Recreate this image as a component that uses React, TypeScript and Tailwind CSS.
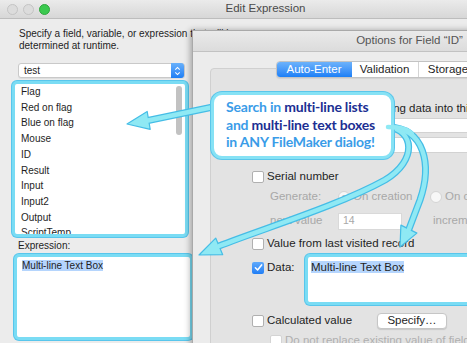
import React from "react";

const items = ["Flag", "Red on flag", "Blue on flag", "Mouse", "ID", "Result", "Input", "Input2", "Output", "ScriptTemp"];

function Check({ checked, dim }: { checked?: boolean; dim?: boolean }) {
  if (checked) {
    return (
      <span className="flex h-[12px] w-[12px] shrink-0 items-center justify-center rounded-[2px] bg-gradient-to-b from-[#5fa9fb] to-[#1f7ef5]">
        <svg viewBox="0 0 12 12" className="h-[11px] w-[11px]">
          <path d="M2.6 6.3 L5 8.7 L9.4 3.2" stroke="white" strokeWidth="1.7" fill="none" strokeLinecap="round" strokeLinejoin="round" />
        </svg>
      </span>
    );
  }
  return (
    <span
      className={`h-[12px] w-[12px] shrink-0 rounded-[2px] border bg-white ${dim ? "border-[#d4d4d4]" : "border-[#b0b0b0]"}`}
    />
  );
}

function Radio({ on }: { on?: boolean }) {
  return (
    <span className="flex h-[12px] w-[12px] shrink-0 items-center justify-center rounded-full border border-[#d4d4d4] bg-[#f7f7f7]">
      {on && <span className="h-[4px] w-[4px] rounded-full bg-[#b8b8b8]" />}
    </span>
  );
}

function Arrows() {
  const fill = "#8fe9f4";
  const edge = "#45bde6";
  const shaft1 = "M213 107 L148 120.5";
  const shaft2 = "M388 127 C414 130, 418 160, 385 180 C340 205, 265 228, 219 246";
  const shaft3 = "M388 127 C425 128, 432 165, 420 200 L409 229";
  return (
    <svg className="pointer-events-none absolute left-0 top-0" width="467" height="343" viewBox="0 0 467 343">
      {[shaft1, shaft2, shaft3].map((d, i) => (
        <path key={`o${i}`} d={d} stroke={edge} strokeWidth="7" fill="none" strokeLinecap="round" />
      ))}
      <polygon points="127,124 147.2,111.5 150.2,129.3" fill={fill} stroke={edge} strokeWidth="1.2" strokeLinejoin="round" />
      <polygon points="199,255 215.7,238.1 222.7,254.7" fill={fill} stroke={edge} strokeWidth="1.2" strokeLinejoin="round" />
      <polygon points="400,247 400.9,225.1 416.9,233.1" fill={fill} stroke={edge} strokeWidth="1.2" strokeLinejoin="round" />
      {[shaft1, shaft2, shaft3].map((d, i) => (
        <path key={`i${i}`} d={d} stroke={fill} strokeWidth="4.5" fill="none" strokeLinecap="round" />
      ))}
    </svg>
  );
}

export default function App() {
  return (
    <div className="relative h-[343px] w-[467px] overflow-hidden bg-[#ececec] font-['Liberation_Sans',Arial,sans-serif] text-[#1e1e1e]">
      {/* Edit Expression (back window) */}
      <div className="absolute left-0 top-0 flex h-[343px] w-[527px] flex-col bg-[#ececec]">
        <div className="relative flex h-[19px] shrink-0 items-center border-b border-[#bdbdbd] bg-gradient-to-b from-[#ebebeb] to-[#d7d7d7] pl-[7px]">
          <div className="flex gap-[5px]">
            <span className="h-[11px] w-[11px] rounded-full border border-[#c4c4c4] bg-[#dcdcdc]" />
            <span className="h-[11px] w-[11px] rounded-full border border-[#c4c4c4] bg-[#dcdcdc]" />
            <span className="h-[11px] w-[11px] rounded-full border border-[#2fa63e] bg-[#3bc94f]" />
          </div>
          <span className="absolute inset-x-0 pl-[4px] text-center text-[11.5px] text-[#4a4a4a]">Edit Expression</span>
        </div>
        <div className="flex flex-col pl-[18px] pt-[9px]">
          <p className="ml-[1px] text-[10px] leading-[11.5px]">
            Specify a field, variable, or expression that will be
            <br />
            determined at runtime.
          </p>
          <div className="mt-[12px] flex h-[15px] w-[167px] items-center justify-between rounded-[3px] border border-[#c9c9c9] bg-white pl-[5px] shadow-[0_1px_0_rgba(0,0,0,0.06)]">
            <span className="text-[10px]">test</span>
            <span className="flex h-[15px] w-[13px] flex-col items-center justify-center rounded-r-[3px] bg-gradient-to-b from-[#67b0fb] to-[#1c7ef5]">
              <svg viewBox="0 0 8 11" className="h-[10px] w-[7px]">
                <path d="M1.5 4 L4 1.5 L6.5 4 M1.5 7 L4 9.5 L6.5 7" stroke="white" strokeWidth="1.2" fill="none" />
              </svg>
            </span>
          </div>
          <div className="relative -ml-[6px] mt-[3px] h-[156px] w-[176px] overflow-hidden rounded-[5px] border-[3px] border-[#7adcf4] bg-white shadow-[0_0_0_1px_#58c6ec]">
            <ul className="pl-[3px] text-[10px] leading-[15.7px]">
              {items.map((t) => (
                <li key={t} className="pl-[3px]">
                  {t}
                </li>
              ))}
            </ul>
            <span className="absolute right-[3px] top-[2px] h-[49px] w-[6px] rounded-full bg-[#c2c2c2]" />
          </div>
          <span className="mt-[3px] text-[10px] leading-[12px]">Expression:</span>
          <div className="-ml-[4px] mt-[2px] h-[86px] w-[179px] rounded-[5px] border-[3px] border-[#7adcf4] bg-white pl-[5px] pt-[3px] text-[10px] leading-[12px] shadow-[0_0_0_1px_#58c6ec]">
            <span className="bg-[#b5d5fd]">Multi-line Text Box</span>
          </div>
        </div>
      </div>

      {/* Options for Field (front window) */}
      <div className="absolute left-[192px] top-[30px] flex h-[330px] w-[434px] flex-col border-l border-t border-[#a9a9a9] bg-[#ececec] shadow-[-2px_0_6px_rgba(0,0,0,0.3)]">
        <div className="flex h-[21px] shrink-0 items-center justify-center border-b border-[#c2c2c2] bg-gradient-to-b from-[#eaeaea] to-[#dcdcdc] text-[11.5px] text-[#555]">
          Options for Field “ID”
        </div>
        <div className="flex flex-col px-[17px]">
          <div className="relative z-10 mt-[9px] flex h-[17px] justify-center text-[11.5px]">
            <div className="flex overflow-hidden rounded-[4px] border border-[#c3c3c3] bg-white shadow-[0_1px_1px_rgba(0,0,0,0.08)]">
              <span className="flex w-[75px] items-center justify-center bg-gradient-to-b from-[#6cb2fb] to-[#1a7ff6] text-white">Auto-Enter</span>
              <span className="flex w-[67px] items-center justify-center border-r border-[#d4d4d4]">Validation</span>
              <span className="flex w-[60px] items-center justify-center border-r border-[#d4d4d4]">Storage</span>
              <span className="flex w-[64px] items-center justify-center">Furigana</span>
            </div>
          </div>
          <div className="-mt-[10px] flex h-[300px] flex-col rounded-[4px] border border-[#d0d0d0] bg-[#e3e3e3] text-[11.5px]">
            <p className="ml-[30px] mt-[32px] leading-[14px]">Automatically enter the following data into this field:</p>
            <div className="ml-[60px] mt-[3px] h-[15px] w-[320px] rounded-[3px] border border-[#d2d2d2] bg-white" />
            <div className="ml-[60px] mt-[4px] h-[16px] w-[320px] rounded-[3px] border border-[#d2d2d2] bg-white" />

            <div className="ml-[41px] mt-[14px] flex h-[20px] items-center gap-[3px]">
              <Check />
              <span>Serial number</span>
            </div>
            <div className="ml-[59px] flex h-[20px] items-center text-[#a8a8a8]">
              <span className="w-[68px]">Generate:</span>
              <span className="flex w-[92px] items-center gap-[3px]">
                <Radio on />
                <span>On creation</span>
              </span>
              <span className="flex items-center gap-[3px] whitespace-nowrap">
                <Radio />
                <span>On commit</span>
              </span>
            </div>
            <div className="ml-[59px] mt-[4px] flex h-[20px] items-center text-[#a8a8a8]">
              <span className="w-[68px]">next value</span>
              <span className="flex h-[17px] w-[64px] items-center border border-[#d9d9d9] bg-white pl-[4px] text-[10.5px]">14</span>
              <span className="ml-[31px] whitespace-nowrap">increment by</span>
            </div>
            <div className="ml-[41px] mt-[3px] flex h-[20px] items-center gap-[3px]">
              <Check />
              <span>Value from last visited record</span>
            </div>
            <div className="ml-[41px] flex h-[51px] items-start">
              <div className="mt-[7px] flex h-[13px] w-[53px] items-center gap-[3px]">
                <Check checked />
                <span>Data:</span>
              </div>
              <div className="h-[51px] w-[200px] rounded-[5px] border-[3px] border-[#7adcf4] bg-white pl-[3px] pt-[3px] leading-[14px] shadow-[0_0_0_1px_#58c6ec]">
                <span className="bg-[#b5d5fd]">Multi-line Text Box</span>
              </div>
            </div>
            <div className="ml-[41px] mt-[6px] flex h-[20px] items-center">
              <div className="flex w-[125px] items-center gap-[3px]">
                <Check />
                <span>Calculated value</span>
              </div>
              <span className="flex h-[16px] w-[70px] items-center justify-center rounded-[4px] border border-[#c6c6c6] bg-white shadow-[0_1px_1px_rgba(0,0,0,0.12)]">
                Specify…
              </span>
            </div>
            <div className="ml-[59px] flex h-[20px] items-center gap-[3px] text-[#b0b0b0]">
              <Check dim />
              <span className="whitespace-nowrap">Do not replace existing value of field (if any)</span>
            </div>
          </div>
        </div>
      </div>

      <Arrows />

      {/* Callout */}
      <div className="absolute left-[211px] top-[92px] h-[67px] w-[183px] rounded-[11px] border-[3px] border-[#86e2f5] bg-white pl-[12px] pt-[3px] font-['Lato',sans-serif] text-[14px] font-bold leading-[17.5px] tracking-[-0.2px] text-[#3a9ce8] shadow-[0_0_0_1px_#5bc6ea]">
        <div>
          Search in <span className="text-[#1c2f93]">multi-line lists</span>
        </div>
        <div>
          and <span className="text-[#1c2f93]">multi-line text boxes</span>
        </div>
        <div>in ANY FileMaker dialog!</div>
      </div>
      <svg className="pointer-events-none absolute left-0 top-0" width="467" height="343" viewBox="0 0 467 343">
        <path d="M388 127 C400 127, 408 129, 412 134" stroke="#8fe9f4" strokeWidth="4.5" fill="none" strokeLinecap="round" />
      </svg>
    </div>
  );
}
